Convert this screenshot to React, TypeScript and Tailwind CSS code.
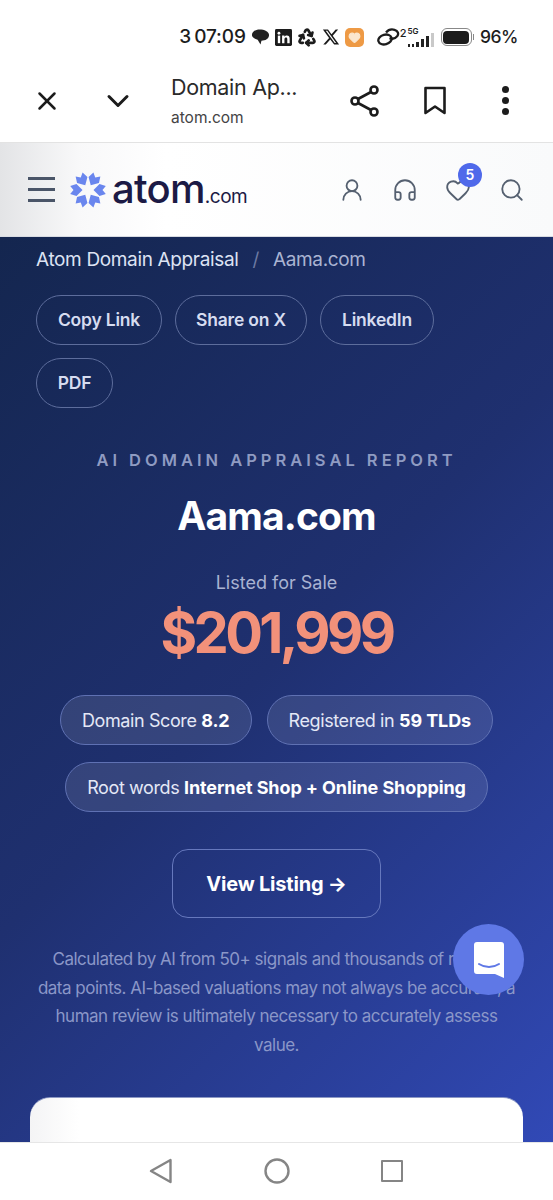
import { ChevronDown, Headphones, Heart, Recycle, Search, UserRound, X } from 'lucide-react';

function StatusBar() {
  return (
    <div className="h-[62px] bg-white flex items-end justify-end pr-[35px] pb-[13px] text-[#1c1c1c]">
      <div className="flex items-center h-[24px]">
        <span className="text-[19px] font-medium tracking-[-0.100px] mr-[5px]">
          3<span className="ml-[3px]">07:09</span>
        </span>
        {/* chat */}
        <svg width="19" height="18" viewBox="0 0 20 18" className="mr-[5px]">
          <path d="M9 1c5 0 10 2 10 6s-4 6-8 6l-1 4-3-5C3 11 1 9 1 7c0-4 4-6 8-6z" fill="#222" />
        </svg>
        {/* linkedin */}
        <svg width="17" height="17" viewBox="0 0 18 18" className="mr-[5px]">
          <rect width="18" height="18" rx="1.500" fill="#1c1c1c" />
          <rect x="3" y="7" width="2.500" height="8" fill="#fff" />
          <circle cx="4.200" cy="4.500" r="1.500" fill="#fff" />
          <path d="M7.500 7H10v1.200c.6-.9 1.500-1.400 2.600-1.400C14.600 6.800 15.500 8 15.500 10v5H13v-4.500c0-1-.4-1.600-1.300-1.600s-1.700.6-1.700 1.700V15H7.500z" fill="#fff" />
        </svg>
        <Recycle className="w-[20px] h-[20px] mr-[5px]" strokeWidth={3.200} />
        {/* x */}
        <svg width="18" height="18" viewBox="0 0 24 24" className="mr-[5px]">
          <path d="M18.200 2h3.300l-7.200 8.300L22.800 22h-6.600l-5.200-6.800L5 22H1.700l7.700-8.800L1.200 2H8l4.700 6.200zm-1.200 18h1.800L7 3.800H5z" fill="#1c1c1c" />
        </svg>
        {/* app tile */}
        <div className="w-[19px] h-[19px] rounded-[5px] bg-[#ee9a45] flex items-center justify-center mr-[13px]">
          <Heart className="w-[13px] h-[13px] text-[#fbe7cf] fill-[#fbe7cf]" />
        </div>
        {/* link */}
        <svg width="23" height="18" viewBox="0 0 23 18" fill="none" stroke="#1c1c1c" strokeWidth="2.300">
          <ellipse cx="8" cy="11.500" rx="6.800" ry="4.800" transform="rotate(-15 8 11.500)" />
          <path d="M9 4.500C11 2 14.500 1 17.500 1.800c3.500 1 4.500 4 2.800 6.400-1.700 2.300-5 3-7.800 2" />
        </svg>
        <span className="text-[11px] font-medium leading-none self-start mt-[3px] mr-[1px]">2</span>
        <div className="flex flex-col items-start mr-[7px]">
          <span className="text-[8px] font-semibold leading-[8px]">5G</span>
          <div className="flex items-end gap-[2px] h-[12px]">
            <div className="w-[2px] h-[3px] bg-[#222]" />
            <div className="w-[2px] h-[3px] bg-[#222]" />
            <div className="w-[3px] h-[5px] bg-[#222]" />
            <div className="w-[3px] h-[8px] bg-[#222]" />
            <div className="w-[3px] h-[11px] bg-[#222]" />
            <div className="w-[3px] h-[14px] bg-[#c9c9c9]" />
          </div>
        </div>
        <div className="w-[31px] h-[18px] rounded-[6px] border border-[#888] p-[1.500px] mr-[1px]">
          <div className="w-full h-full rounded-[4px] bg-[#1c1c1c]" />
        </div>
        <div className="w-[1.500px] h-[6px] bg-[#888] mr-[6px]" />
        <span className="text-[17.500px] font-medium tracking-[-0.500px]">96%</span>
      </div>
    </div>
  );
}

function BrowserBar() {
  return (
    <div className="h-[81px] bg-white border-b border-[#e3e3e3] flex items-center text-[#1c1c1c]">
      <X className="w-[30px] h-[30px] ml-[32px] -mt-[3px]" strokeWidth={2} />
      <ChevronDown className="w-[36px] h-[36px] ml-[38px] -mt-[3px]" strokeWidth={2} />
      <div className="ml-[35px] w-[150px] flex flex-col -mt-[3px]">
        <span className="text-[21.500px] leading-[30px] tracking-[-0.300px] text-[#2a2a2a]">Domain Ap...</span>
        <span className="text-[15.500px] leading-[22px] mt-[5px] text-[#444]">atom.com</span>
      </div>
      <svg width="30" height="34" viewBox="0 0 30 34" fill="none" stroke="#1c1c1c" strokeWidth="2.600" className="ml-[29px] -mt-[3px]">
        <circle cx="24" cy="6" r="3.500" />
        <circle cx="5" cy="17" r="3.500" />
        <circle cx="24" cy="28" r="3.500" />
        <path d="M8 15 21 8M8 19l13 7" />
      </svg>
      <svg width="24" height="30" viewBox="0 0 24 30" fill="none" stroke="#1c1c1c" strokeWidth="2.600" className="ml-[43px] -mt-[3px]">
        <path d="M2.500 2h19v25L12 20.500 2.500 27z" strokeLinejoin="round" />
      </svg>
      <div className="ml-[55px] -mt-[3px] flex flex-col gap-[4.500px]">
        <div className="w-[6.500px] h-[6.500px] rounded-full bg-[#1c1c1c]" />
        <div className="w-[6.500px] h-[6.500px] rounded-full bg-[#1c1c1c]" />
        <div className="w-[6.500px] h-[6.500px] rounded-full bg-[#1c1c1c]" />
      </div>
    </div>
  );
}

const petalAngles = [0, 60, 120, 180, 240, 300];

function AtomLogo() {
  return (
    <svg width="36" height="36" viewBox="-18 -18 36 36" fill="#6a86ee">
      {petalAngles.map((angle) => (
        <path key={angle} d="M5.500 0 11.500 -6 17.800 -4 14.500 0 17.800 4 11.500 6Z" transform={`rotate(${angle})`} />
      ))}
    </svg>
  );
}

function SiteHeader() {
  return (
    <header className="h-[94px] shrink-0 bg-[linear-gradient(90deg,#e3e4e6_0%,#f8f8f9_14%,#ffffff_30%,#f9fafb_100%)] border-b border-[#d8dbe2] flex items-center pl-[28px]">
      <div className="flex flex-col gap-[8.500px] w-[27px]">
        <div className="h-[2.500px] bg-[#4a5568]" />
        <div className="h-[2.500px] bg-[#4a5568]" />
        <div className="h-[2.500px] bg-[#4a5568]" />
      </div>
      <div className="ml-[15px]">
        <AtomLogo />
      </div>
      <div className="ml-[6px] w-[135px] flex items-baseline text-[#1c1a45] -mt-[2px]">
        <span className="text-[40px] leading-none font-medium tracking-[-0.700px]">atom</span>
        <span className="text-[19px] leading-none tracking-[-0.500px]">.com</span>
      </div>
      <UserRound className="w-[26px] h-[26px] ml-[92px] text-[#556070]" strokeWidth={1.700} />
      <Headphones className="w-[26px] h-[26px] ml-[27px] text-[#556070]" strokeWidth={1.700} />
      <div className="relative ml-[27px]">
        <Heart className="w-[26px] h-[26px] text-[#556070]" strokeWidth={1.700} />
        <span className="absolute -top-[14px] left-[13px] w-[24px] h-[24px] rounded-full bg-[#4f69ea] text-white text-[14px] font-semibold flex items-center justify-center">
          5
        </span>
      </div>
      <Search className="w-[26px] h-[26px] ml-[28px] text-[#556070]" strokeWidth={1.700} />
    </header>
  );
}

function ShareButton({ label, width }: { label: string; width: string }) {
  return (
    <button className={`${width} h-[50px] rounded-full border border-[#5d6d9c] text-[#d6dcf0] text-[17.500px] tracking-[-0.200px] font-semibold whitespace-nowrap`}>
      {label}
    </button>
  );
}

function Pill({ label, value }: { label: string; value: string }) {
  return (
    <div className="h-[50px] px-[21px] rounded-full border border-[#5f71b3] bg-white/10 flex items-center text-[18px] tracking-[-0.400px] text-[#e4e8f6] whitespace-nowrap">
      {label}&nbsp;<b className="font-bold tracking-[-0.100px] text-white">{value}</b>
    </div>
  );
}

function Hero() {
  return (
    <main className="relative flex-1 overflow-hidden bg-[linear-gradient(135deg,#14264f_0%,#1f3070_48%,#3149b6_100%)] flex flex-col">
      <div className="pt-[11px] pl-[36px] flex items-center text-[19px] leading-[24px] tracking-[-0.350px]">
        <span className="text-[#dde3f3]">Atom Domain Appraisal</span>
        <span className="mx-[14px] text-[#6d7aa3]">/</span>
        <span className="text-[#aab4d2]">Aama.com</span>
      </div>
      <div className="mt-[23px] px-[36px] flex flex-wrap gap-[13px]">
        <ShareButton label="Copy Link" width="w-[126px]" />
        <ShareButton label="Share on X" width="w-[132px]" />
        <ShareButton label="LinkedIn" width="w-[114px]" />
        <ShareButton label="PDF" width="w-[77px]" />
      </div>
      <div className="mt-[41px] text-center text-[16.500px] leading-[22px] font-semibold tracking-[4px] text-[#8f9bc2]">
        AI DOMAIN APPRAISAL REPORT
      </div>
      <h1 className="mt-[20px] text-center text-[39px] leading-[50px] font-bold tracking-[-0.900px] text-white">Aama.com</h1>
      <div className="mt-[30px] text-center text-[18px] leading-[24px] text-[#a9b3d2]">Listed for Sale</div>
      <div className="mt-[3px] text-center text-[56px] leading-[70px] font-bold tracking-[-3.600px] text-[#f2917a]">$201,999</div>
      <div className="mt-[27px] flex flex-wrap justify-center gap-x-[15px] gap-y-[17px] px-[20px]">
        <Pill label="Domain Score" value="8.2" />
        <Pill label="Registered in" value="59 TLDs" />
        <Pill label="Root words" value="Internet Shop + Online Shopping" />
      </div>
      <div className="mt-[37px] flex justify-center">
        <button className="w-[209px] h-[69px] rounded-[16px] border border-[#6678bd] text-white text-[20px] font-bold tracking-[-0.200px]">
          View Listing →
        </button>
      </div>
      <p className="mt-[27px] mx-auto w-[484px] text-center text-[17px] leading-[28.500px] tracking-[-0.490px] text-[#8b97c8]">
        Calculated by AI from 50+ signals and thousands of market data points. AI-based valuations may not always be accurate; a human review is ultimately necessary to accurately assess value.
      </p>
      <div className="mt-[38px] mx-[30px] h-[120px] shrink-0 rounded-t-[20px] bg-[linear-gradient(90deg,#f4f4f5_0%,#ffffff_10%)] border-t border-[#8d99c4]" />
      {/* chat launcher */}
      <div className="absolute left-[453px] top-[687px] w-[71px] h-[71px] rounded-full bg-[#5f78e6] flex items-center justify-center">
        <svg width="32" height="38" viewBox="0 0 32 38">
          <path d="M4 1h24a3 3 0 0 1 3 3v33l-9-4H4a3 3 0 0 1-3-3V4a3 3 0 0 1 3-3z" fill="#fff" />
          <path d="M6 23c6 4 14 4 20 0" fill="none" stroke="#5f78e6" strokeWidth="2" strokeLinecap="round" />
        </svg>
      </div>
    </main>
  );
}

function NavBar() {
  return (
    <nav className="h-[58px] shrink-0 bg-white border-t border-[#e6e6e6] flex items-center justify-center gap-[91px] pb-[2px] pr-[2px]">
      <svg width="24" height="26" viewBox="0 0 24 26" fill="none" stroke="#858585" strokeWidth="2.400" strokeLinejoin="round">
        <path d="M21.500 2v22L2 13z" />
      </svg>
      <svg width="26" height="26" viewBox="0 0 26 26" fill="none" stroke="#858585" strokeWidth="2.400">
        <circle cx="13" cy="13" r="11.500" />
      </svg>
      <div className="w-[22px] h-[22px] border-[2.500px] border-[#858585] rounded-[1px]" />
    </nav>
  );
}

export default function App() {
  return (
    <div className="w-[553px] h-[1200px] overflow-hidden flex flex-col bg-white font-['Inter',sans-serif]">
      <StatusBar />
      <BrowserBar />
      <SiteHeader />
      <Hero />
      <NavBar />
    </div>
  );
}
